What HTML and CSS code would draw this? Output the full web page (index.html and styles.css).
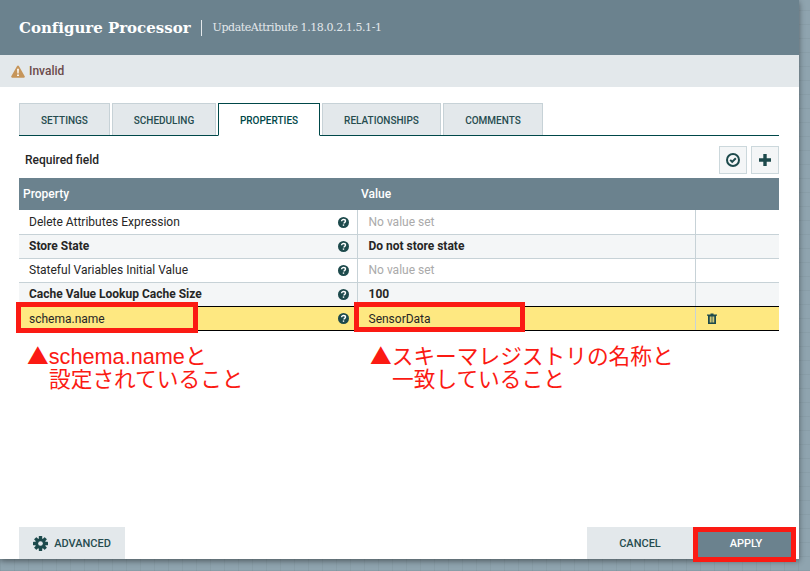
FILE: index.html
```html
<!DOCTYPE html>
<html lang="ja">
<head>
    <meta charset="UTF-8">
    <meta name="viewport" content="width=device-width, initial-scale=1.0">
    <title>Configure Processor</title>
    <link rel="stylesheet" href="styles.css">
</head>
<body>
    <div class="dialog">
        <div class="dialogHeader">
            <span class="dialogTitle">Configure Processor</span>
            <span class="dialogSubtitle">UpdateAttribute 1.18.0.2.1.5.1-1</span>
        </div>
        <div class="statusBar">
            <svg class="warnIcon" viewBox="0 0 14 13">
                <path d="M7 .5c.4 0 .7.2.9.5l5.800 10.200c.4.7 0 1.500-.9 1.500H1.200c-.9 0-1.300-.8-.9-1.500L6.100 1c.2-.3.500-.5.900-.5z" fill="#c6955a"/>
                <path d="M6.100 3.800h1.800l-.3 4.800H6.400zM6.100 9.400h1.800v1.700H6.100z" fill="#fff"/>
            </svg>
            <span class="statusText">Invalid</span>
        </div>

        <div class="tabs">
            <div class="tab tabSettings">Settings</div>
            <div class="tab tabScheduling">Scheduling</div>
            <div class="tab tabProperties active">Properties</div>
            <div class="tab tabRelationships">Relationships</div>
            <div class="tab tabComments">Comments</div>
        </div>

        <div class="toolbar">
            <span class="requiredLabel">Required field</span>
            <div class="toolButtons">
                <div class="toolButton">
                    <svg viewBox="0 0 14 14" width="14" height="14">
                        <circle cx="7" cy="7" r="6" fill="none" stroke="#1d4a4c" stroke-width="2"/>
                        <path d="M4.200 6.900l2 2 3.600-3.700" fill="none" stroke="#1d4a4c" stroke-width="2"/>
                    </svg>
                </div>
                <div class="toolButton">
                    <svg viewBox="0 0 14 14" width="14" height="14">
                        <path d="M5.300 1h3.400v4.300H13v3.400H8.700V13H5.300V8.700H1V5.300h4.300z" fill="#1d4a4c"/>
                    </svg>
                </div>
            </div>
        </div>

        <table class="propTable">
            <colgroup>
                <col class="colProperty">
                <col class="colValue">
                <col>
            </colgroup>
            <thead>
                <tr><th>Property</th><th>Value</th><th></th></tr>
            </thead>
            <tbody>
                <tr>
                    <td><div class="nameCell">Delete Attributes Expression<svg class="helpIcon" viewBox="0 0 11 11"><use href="#help"/></svg></div></td>
                    <td class="unset">No value set</td>
                    <td></td>
                </tr>
                <tr class="required">
                    <td><div class="nameCell">Store State<svg class="helpIcon" viewBox="0 0 11 11"><use href="#help"/></svg></div></td>
                    <td>Do not store state</td>
                    <td></td>
                </tr>
                <tr>
                    <td><div class="nameCell">Stateful Variables Initial Value<svg class="helpIcon" viewBox="0 0 11 11"><use href="#help"/></svg></div></td>
                    <td class="unset">No value set</td>
                    <td></td>
                </tr>
                <tr class="required beforeSelected">
                    <td><div class="nameCell">Cache Value Lookup Cache Size<svg class="helpIcon" viewBox="0 0 11 11"><use href="#help"/></svg></div></td>
                    <td>100</td>
                    <td></td>
                </tr>
                <tr class="selected">
                    <td><div class="nameCell">schema.name<svg class="helpIcon" viewBox="0 0 11 11"><use href="#help"/></svg></div></td>
                    <td>SensorData</td>
                    <td>
                        <svg class="trashIcon" viewBox="0 0 10 11">
                            <path d="M3.500 1.500V.5h3v1H10v1.200H9V11H1V2.700H0V1.500zM2.800 3.500v6h1v-6zm1.700 0v6h1v-6zm1.700 0v6h1v-6z" fill="#1d4a4c" fill-rule="evenodd"/>
                        </svg>
                    </td>
                </tr>
            </tbody>
        </table>

        <div class="dialogFooter">
            <div class="footerButton advanced">
                <svg class="gearIcon" viewBox="0 0 16 16">
                    <g fill="#1d4a4c">
                        <rect x="6.200" y="0" width="3.600" height="16" rx=".6"/>
                        <rect x="6.200" y="0" width="3.600" height="16" rx=".6" transform="rotate(45 8 8)"/>
                        <rect x="6.200" y="0" width="3.600" height="16" rx=".6" transform="rotate(90 8 8)"/>
                        <rect x="6.200" y="0" width="3.600" height="16" rx=".6" transform="rotate(135 8 8)"/>
                        <circle cx="8" cy="8" r="5.600"/>
                    </g>
                    <circle cx="8" cy="8" r="2.500" fill="#e3e8eb"/>
                </svg>
                Advanced
            </div>
            <div class="footerActions">
                <div class="footerButton cancel">Cancel</div>
                <div class="footerButton apply">Apply</div>
            </div>
        </div>
    </div>

    <!-- red marks drawn over the screenshot -->
    <div class="mark markName"></div>
    <div class="mark markValue"></div>
    <div class="mark markApply"></div>
    <div class="note noteName"><span class="noteTri">▲</span>schema.nameと</div>
    <div class="note noteNameSecond">設定されていること</div>
    <div class="note noteValue"><span class="noteTri">▲</span>スキーマレジストリの名称と</div>
    <div class="note noteValueSecond">一致していること</div>

    <svg class="iconDefs" width="0" height="0">
        <symbol id="help" viewBox="0 0 11 11">
            <circle cx="5.500" cy="5.500" r="5.500" fill="#1d4a4c"/>
            <path d="M3.600 4.300c0-1.200.9-1.800 2-1.800s1.900.6 1.900 1.600c0 1.300-1.500 1.300-1.500 2.400" fill="none" stroke="#fff" stroke-width="1.400"/>
            <rect x="4.800" y="7.400" width="1.400" height="1.400" fill="#fff"/>
        </symbol>
    </svg>
</body>
</html>
```

FILE: styles.css
```css
body {
    margin: 0;
    width: 810px;
    height: 571px;
    overflow: hidden;
    position: relative;
    font-family: Roboto, sans-serif;
    background-color: #8fa4af;
    background-image:
        repeating-linear-gradient(0deg, rgba(0, 0, 0, 0.04) 0 1px, transparent 1px 14px),
        repeating-linear-gradient(90deg, rgba(0, 0, 0, 0.04) 0 1px, transparent 1px 14px);
}

.dialog {
    width: 799px;
    height: 559px;
    background-color: #fff;
    box-shadow: 0 2px 6px rgba(0, 0, 0, 0.45);
    display: flex;
    flex-direction: column;
}

.dialogHeader {
    height: 55px;
    background-color: #6b828e;
    display: flex;
    align-items: center;
    padding: 0 19px;
    box-sizing: border-box;
    color: #fff;
}

.dialogTitle {
    font-family: "DejaVu Serif", serif;
    font-weight: bold;
    font-size: 15px;
    letter-spacing: -0.01px;
    padding-right: 10px;
    margin-right: 11px;
    line-height: 16px;
    border-right: 1px solid #e3e8eb;
}

.dialogSubtitle {
    font-family: "DejaVu Serif", serif;
    font-size: 11px;
    color: #e3e8eb;
    letter-spacing: -0.42px;
}

.statusBar {
    height: 32px;
    background-color: #e3e8eb;
    display: flex;
    align-items: center;
    padding-left: 11px;
}

.warnIcon {
    width: 14px;
    height: 13px;
    margin-right: 4px;
}

.statusText {
    font-size: 12px;
    font-weight: 500;
    color: #6b4a4a;
}

.tabs {
    display: flex;
    gap: 2px;
    margin: 16px 20px 0 19px;
    height: 33px;
    box-sizing: border-box;
    border-bottom: 1px solid #004849;
}

.tab {
    height: 32px;
    box-sizing: border-box;
    padding-top: 2px;
    background-color: #e3e8eb;
    border: 1px solid #c7d2d7;
    border-bottom: none;
    display: flex;
    align-items: center;
    justify-content: center;
    font-size: 10px;
    font-weight: 500;
    text-transform: uppercase;
    color: #264c4f;
}

.tabSettings { width: 91px; }
.tabScheduling { width: 104px; }
.tabProperties { width: 102px; }
.tabRelationships { width: 119px; }
.tabComments { width: 100px; }

.tab.active {
    height: 33px;
    background-color: #fff;
    border: 1px solid #004849;
    border-bottom: 1px solid #fff;
    color: #004849;
}

.toolbar {
    display: flex;
    justify-content: space-between;
    align-items: center;
    margin: 10px 20px 4px 25px;
    height: 28px;
}

.requiredLabel {
    font-size: 12px;
    font-weight: 500;
    color: #262626;
}

.toolButtons {
    display: flex;
    gap: 4px;
}

.toolButton {
    width: 28px;
    height: 28px;
    box-sizing: border-box;
    background-color: #f4f6f7;
    border: 1px solid #ccd8dc;
    display: flex;
    align-items: center;
    justify-content: center;
}

.propTable {
    margin-left: 19px;
    width: 760px;
    border-collapse: collapse;
    table-layout: fixed;
    font-size: 12px;
    color: #262626;
}

.colProperty { width: 338px; }
.colValue { width: 338px; }

.propTable th {
    height: 32px;
    padding: 0 0 0 4px;
    background-color: #6b828e;
    color: #fff;
    font-size: 12px;
    font-weight: 500;
    text-align: left;
}

.propTable td {
    height: 24px;
    box-sizing: border-box;
    padding: 0 0 0 11px;
    border-bottom: 1px solid #c7d2d7;
    border-left: 1px solid #c7d2d7;
}

.propTable td:first-child {
    padding-left: 10px;
    border-left: none;
}

.propTable tbody tr:first-child td,
.propTable .selected td {
    padding-top: 1px;
}

.nameCell {
    display: flex;
    justify-content: space-between;
    align-items: center;
    padding-right: 8px;
}

.helpIcon {
    width: 11px;
    height: 11px;
}

.trashIcon {
    width: 10px;
    height: 11px;
    display: block;
}

.unset {
    color: #aaa;
}

.required td {
    background-color: #f4f6f7;
    font-weight: 700;
}

.propTable .beforeSelected td {
    border-bottom-color: #000;
}

.selected td {
    background-color: #fee881;
    border-bottom: 1px solid #000;
}

.dialogFooter {
    margin-top: auto;
    padding: 0 3px 0 19px;
    display: flex;
    justify-content: space-between;
}

.footerActions {
    display: flex;
}

.footerButton {
    height: 32px;
    display: flex;
    align-items: center;
    justify-content: center;
    font-size: 11px;
    font-weight: 500;
    text-transform: uppercase;
    background-color: #e3e8eb;
    color: #264c4f;
}

.advanced { width: 106px; }
.cancel { width: 106px; }

.apply {
    width: 100px;
    padding-left: 3px;
    background-color: #6b828e;
    color: #fff;
}

.gearIcon {
    width: 15px;
    height: 15px;
    margin-right: 6px;
}

.mark {
    position: absolute;
    box-sizing: border-box;
    border: 5px solid #fb1a13;
}

.markName { left: 16px; top: 302px; width: 182px; height: 31px; }
.markValue { left: 354px; top: 302px; width: 171px; height: 30px; }
.markApply { left: 693px; top: 527px; width: 103px; height: 35px; }

.note {
    position: absolute;
    font-family: "Liberation Sans", "Noto Sans CJK JP", sans-serif;
    font-size: 21.7px;
    line-height: 25px;
    color: #fb1a13;
    white-space: nowrap;
}

.noteName { left: 27px; top: 342px; }
.noteNameSecond { left: 49px; top: 367px; }
.noteValue { left: 370px; top: 342px; }
.noteValueSecond { left: 392px; top: 367px; }

.noteTri {
    font-family: "Noto Sans CJK JP", sans-serif;
}

.iconDefs {
    position: absolute;
}
```
